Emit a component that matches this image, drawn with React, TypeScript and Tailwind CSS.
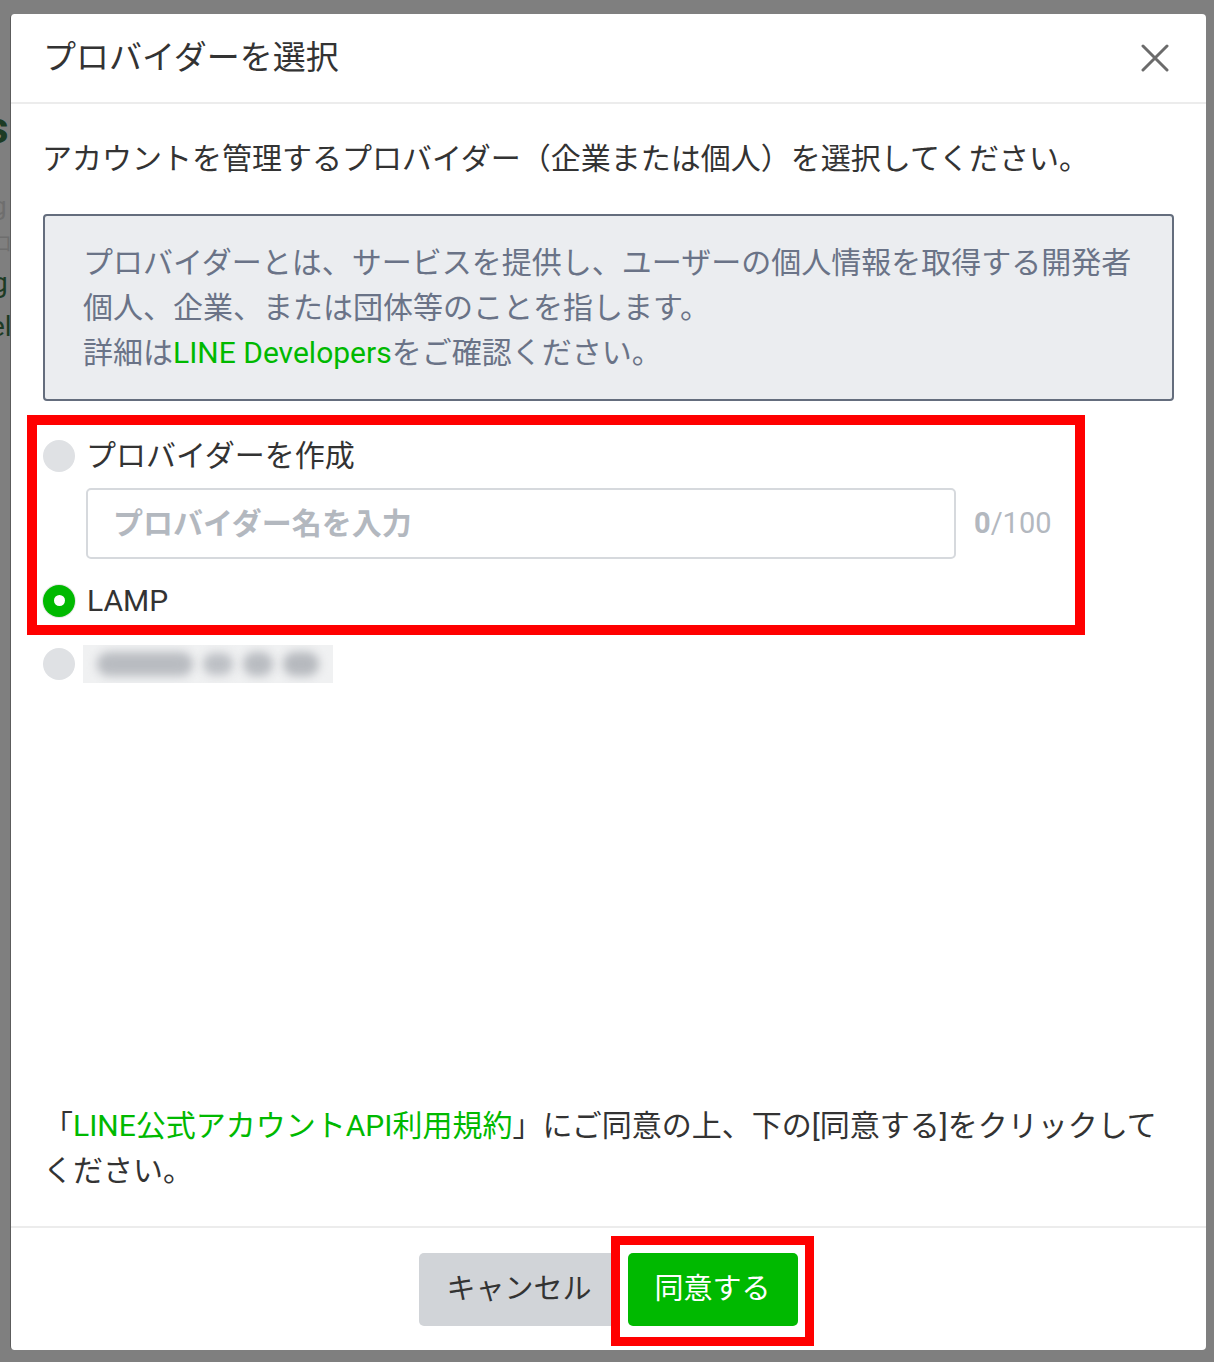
import { useState } from "react";

const font = "font-['Roboto','Noto_Sans_CJK_JP',sans-serif]";

function Radio({ checked }: { checked: boolean }) {
  if (checked) {
    return (
      <span className="w-[32px] h-[32px] shrink-0 rounded-full bg-[#00b900] ring-1 ring-[#e6e6e6] flex items-center justify-center">
        <span className="w-[11px] h-[11px] rounded-full bg-white" />
      </span>
    );
  }
  return <span className="w-[32px] h-[32px] shrink-0 rounded-full bg-[#dfe1e4]" />;
}

export default function App() {
  const [name, setName] = useState("");
  const [selected, setSelected] = useState("lamp");

  return (
    <div className={`w-[1214px] h-[1362px] bg-[#7f7f7f] flex ${font}`}>
      {/* page behind the overlay, only a sliver shows */}
      <div className="w-[10px] shrink-0 overflow-hidden flex flex-col text-[#1d3b24] whitespace-nowrap">
        <span className="mt-[104px] -ml-[14px] text-[44px] font-bold leading-[48px]">s</span>
        <span className="mt-[40px] -ml-[8px] text-[26px] leading-[28px] text-[#6e6e6e]">g</span>
        <span className="mt-[14px] -ml-[8px] text-[20px] leading-[20px] text-[#6e6e6e]">ロ</span>
        <span className="mt-[14px] -ml-[8px] text-[28px] leading-[30px]">g</span>
        <span className="mt-[14px] -ml-[10px] text-[28px] leading-[30px]">el</span>
      </div>

      {/* modal */}
      <div className="mt-[14px] w-[1196px] h-[1336px] shrink-0 bg-white rounded-[4px] border-l border-[#5c5c5c] flex flex-col">
        <header className="h-[90px] shrink-0 pl-[32px] pr-[36px] flex items-center justify-between border-b-2 border-[#ececec]">
          <h2 className="text-[33px] leading-[40px] text-[#333]">プロバイダーを選択</h2>
          <button className="w-[30px] h-[30px] flex items-center justify-center">
            <svg width="28" height="28" viewBox="0 0 28 28">
              <path d="M2 2 L26 26 M26 2 L2 26" stroke="#6b6b6b" strokeWidth="3" strokeLinecap="round" />
            </svg>
          </button>
        </header>

        <div className="flex-1 flex flex-col px-[32px] pt-[32px] pb-[33px]">
          <p className="text-[30px] leading-[45px] text-[#333] -ml-[1px]">
            アカウントを管理するプロバイダー（企業または個人）を選択してください。
          </p>

          <div className="mt-[33px] border-2 border-[#646d7d] bg-[#ebedf0] rounded-[4px] pl-[38px] pr-[16px] py-[24px] text-[30px] leading-[45px] text-[#6a7387]">
            <p>プロバイダーとは、サービスを提供し、ユーザーの個人情報を取得する開発者</p>
            <p>個人、企業、または団体等のことを指します。</p>
            <p>
              詳細は<span className="text-[#00b900]">LINE Developers</span>をご確認ください。
            </p>
          </div>

          <div className="mt-[32px] flex flex-col">
            <div className="relative flex flex-col">
              <label className="h-[45px] flex items-center gap-[11px]" onClick={() => setSelected("new")}>
                <Radio checked={selected === "new"} />
                <span className="text-[30px] leading-[45px] text-[#333]">プロバイダーを作成</span>
              </label>
              <div className="mt-[10px] pl-[43px] flex items-center gap-[18px]">
                <input
                  value={name}
                  onChange={(e) => setName(e.target.value)}
                  placeholder="プロバイダー名を入力"
                  className="w-[870px] h-[71px] border-2 border-[#d6d9dd] rounded-[5px] px-[25px] text-[30px] text-[#333] outline-none placeholder:text-[#b3b8bf] placeholder:font-bold"
                />
                <span className="text-[29px] text-[#b3b8bf]">
                  <span className="font-bold">{name.length}</span>/100
                </span>
              </div>
              <label className="mt-[19px] h-[45px] flex items-center gap-[12px]" onClick={() => setSelected("lamp")}>
                <Radio checked={selected === "lamp"} />
                <span className="text-[30px] leading-[45px] text-[#333]">LAMP</span>
              </label>
              {/* annotation */}
              <div className="absolute left-[-16px] top-[-18px] w-[1058px] bottom-[-12px] border-[10px] border-[#ff0000] pointer-events-none" />
            </div>

            <label className="mt-[18px] h-[45px] flex items-center gap-[8px]" onClick={() => setSelected("other")}>
              <Radio checked={selected === "other"} />
              <span className="w-[250px] h-[38px] bg-[#f0f1f2] flex items-center gap-[10px] pl-[14px] overflow-hidden">
                <span className="w-[96px] h-[24px] rounded-full bg-[#b9bcc1] blur-[5px]" />
                <span className="w-[30px] h-[22px] rounded-full bg-[#bdc0c5] blur-[5px]" />
                <span className="w-[30px] h-[24px] rounded-full bg-[#b9bcc1] blur-[5px]" />
                <span className="w-[36px] h-[24px] rounded-full bg-[#b6b9be] blur-[5px]" />
              </span>
            </label>
          </div>

          <div className="mt-auto text-[30px] leading-[45px] text-[#333]">
            <p className="whitespace-nowrap">
              「<span className="text-[#00b900]">LINE公式アカウントAPI利用規約</span>」にご同意の上、下の[同意する]をクリックして
            </p>
            <p>ください。</p>
          </div>
        </div>

        <footer className="shrink-0 border-t-2 border-[#ececec] pt-[25px] pb-[24px] flex justify-center gap-[9px]">
          <button className="h-[73px] px-[27px] rounded-[5px] bg-[#d1d4d8] text-[29px] text-[#333]">キャンセル</button>
          <div className="relative">
            <button className="h-[73px] px-[27px] rounded-[5px] bg-[#00b900] text-[29px] text-white">同意する</button>
            {/* annotation */}
            <div className="absolute left-[-17px] right-[-16px] top-[-17px] bottom-[-20px] border-[9px] border-[#ff0000] pointer-events-none" />
          </div>
        </footer>
      </div>
    </div>
  );
}
